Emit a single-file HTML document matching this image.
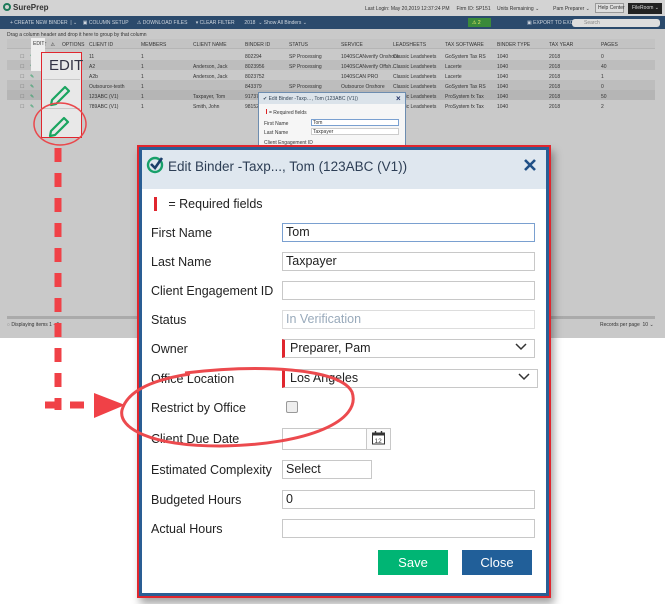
<!DOCTYPE html>
<html><head><meta charset="utf-8"><style>
*{margin:0;padding:0;box-sizing:border-box}
body{width:665px;height:604px;position:relative;overflow:hidden;background:#fff;font-family:"Liberation Sans",sans-serif}
.a{position:absolute}
.t{position:absolute;font-size:5px;color:#333;white-space:nowrap}
.lbl{position:absolute;left:151px;font-size:12.5px;color:#222;white-space:nowrap}
.inp{position:absolute;left:282px;width:253px;height:19px;border:1px solid #c8c8c8;background:#fff;font-size:12.5px;color:#222;padding:1px 3px;white-space:nowrap}
</style></head><body>
<!-- background app (grayed) -->
<div class="a" style="left:0;top:0;width:665px;height:338px;background:#c9c9c9"></div>
<div class="a" style="left:0;top:0;width:665px;height:16px;background:#d3d3d3"></div>
<div class="a" style="left:3px;top:3px;width:8px;height:8px;border-radius:50%;border:2px solid #1e7a5a"></div>
<div class="t" style="left:13px;top:3px;font-size:8px;font-weight:bold;color:#333">SurePrep</div>
<div class="t" style="left:365px;top:6px">Last Login: May 20,2019 12:37:24 PM &nbsp;&nbsp;&nbsp; Firm ID: SP151</div>
<div class="t" style="left:497px;top:6px">Units Remaining ⌄ &nbsp;&nbsp;&nbsp;&nbsp;&nbsp;&nbsp;&nbsp;&nbsp; Pam Preparer ⌄</div>
<div class="a" style="left:595px;top:3px;width:29px;height:10px;border:1px solid #999;background:#ddd"></div>
<div class="t" style="left:598px;top:5px">Help Center</div>
<div class="a" style="left:628px;top:3px;width:34px;height:11px;background:#222"></div>
<div class="t" style="left:632px;top:5px;color:#ddd">FileRoom ⌄</div>
<div class="a" style="left:0;top:16px;width:665px;height:13px;background:#2b4a6c"></div>
<div class="t" style="left:10px;top:20px;color:#cfd6de">+ CREATE NEW BINDER &nbsp;| ⌄ &nbsp;&nbsp;&nbsp;▣ COLUMN SETUP &nbsp;&nbsp;&nbsp;&nbsp; ⚠ DOWNLOAD FILES &nbsp;&nbsp;&nbsp;&nbsp; ▾ CLEAR FILTER &nbsp;&nbsp;&nbsp;&nbsp;&nbsp; 2018 &nbsp;⌄ Show All Binders ⌄</div>
<div class="a" style="left:468px;top:18px;width:23px;height:9px;background:#3a8a3a"></div>
<div class="t" style="left:472px;top:20px;color:#ee6">⚠ 2</div>
<div class="t" style="left:527px;top:20px;color:#cfd6de">▣ EXPORT TO EXCEL</div>
<div class="a" style="left:572px;top:19px;width:88px;height:8px;border-radius:3px;background:#ddd"></div>
<div class="t" style="left:584px;top:20px;color:#888">Search</div>
<div class="t" style="left:7px;top:32px">Drag a column header and drop it here to group by that column</div>
<div class="a" style="left:7px;top:39px;width:648px;height:10px;background:#c3c3c3;border-bottom:1px solid #b5b5b5"></div>
<div class="t" style="left:35px;top:42px">EDIT &nbsp; ⚠</div>
<div class="t" style="left:62px;top:42px">OPTIONS</div>
<div class="t" style="left:89px;top:42px">CLIENT ID</div><div class="t" style="left:141px;top:42px">MEMBERS</div><div class="t" style="left:193px;top:42px">CLIENT NAME</div><div class="t" style="left:245px;top:42px">BINDER ID</div><div class="t" style="left:289px;top:42px">STATUS</div><div class="t" style="left:341px;top:42px">SERVICE</div><div class="t" style="left:393px;top:42px">LEADSHEETS</div><div class="t" style="left:445px;top:42px">TAX SOFTWARE</div><div class="t" style="left:497px;top:42px">BINDER TYPE</div><div class="t" style="left:549px;top:42px">TAX YEAR</div><div class="t" style="left:601px;top:42px">PAGES</div>
<div class="a" style="left:7px;top:60px;width:648px;height:10px;background:#bdbdbd"></div>
<div class="a" style="left:7px;top:80px;width:648px;height:10px;background:#bdbdbd"></div>
<div class="a" style="left:7px;top:90px;width:648px;height:10px;background:#b5b5b5"></div>
<div class="t" style="left:89px;top:52px;line-height:10px">11<br>A2<br>A2b<br>Outsource-testh<br>123ABC (V1)<br>789ABC (V1)</div>
<div class="t" style="left:141px;top:52px;line-height:10px">1<br>1<br>1<br>1<br>1<br>1</div>
<div class="t" style="left:193px;top:52px;line-height:10px">&nbsp;<br>Anderson, Jack<br>Anderson, Jack<br>&nbsp;<br>Taxpayer, Tom<br>Smith, John</div>
<div class="t" style="left:245px;top:52px;line-height:10px">802294<br>8023956<br>8023752<br>843379<br>917373<br>981528</div>
<div class="t" style="left:289px;top:52px;line-height:10px">SP Processing<br>SP Processing<br>&nbsp;<br>SP Processing</div>
<div class="t" style="left:341px;top:52px;line-height:10px">1040SCANverify Onshore<br>1040SCANverify Offsh…<br>1040SCAN PRO<br>Outsource Onshore</div>
<div class="t" style="left:393px;top:52px;line-height:10px">Classic Leadsheets<br>Classic Leadsheets<br>Classic Leadsheets<br>Classic Leadsheets<br>Classic Leadsheets<br>Classic Leadsheets</div>
<div class="t" style="left:445px;top:52px;line-height:10px">GoSystem Tax RS<br>Lacerte<br>Lacerte<br>GoSystem Tax RS<br>ProSystem fx Tax<br>ProSystem fx Tax</div>
<div class="t" style="left:497px;top:52px;line-height:10px">1040<br>1040<br>1040<br>1040<br>1040<br>1040</div>
<div class="t" style="left:549px;top:52px;line-height:10px">2018<br>2018<br>2018<br>2018<br>2018<br>2018</div>
<div class="t" style="left:601px;top:52px;line-height:10px">0<br>40<br>1<br>0<br>50<br>2</div>
<div class="t" style="left:20px;top:52px;line-height:10px;color:#777">☐<br>☐<br>☐<br>☐<br>☐<br>☐</div>
<div class="t" style="left:30px;top:52px;line-height:10px;color:#1a9a5a">✎<br>✎<br>✎<br>✎<br>✎<br>✎</div>
<div class="a" style="left:7px;top:316px;width:648px;height:3px;background:#aaa"></div>
<div class="t" style="left:7px;top:322px">◌ Displaying items 1 - 6</div>
<div class="t" style="left:600px;top:322px">Records per page &nbsp;10 ⌄</div>
<!-- small dialog -->
<div class="a" style="left:258px;top:92px;width:148px;height:54px;background:#f6f6f6;border:1px solid #6d8db0"></div>
<div class="a" style="left:259px;top:93px;width:146px;height:11px;background:#dbe3ea"></div>
<div class="t" style="left:263px;top:96px;color:#345">✔ Edit Binder -Taxp…, Tom (123ABC (V1))</div>
<div class="t" style="left:396px;top:94px;font-size:8px;color:#236;font-weight:bold">×</div>
<div class="a" style="left:266px;top:109px;width:1px;height:5px;background:#d22"></div>
<div class="t" style="left:269px;top:110px">= Required fields</div>
<div class="t" style="left:264px;top:121px">First Name</div>
<div class="a" style="left:311px;top:119px;width:88px;height:7px;border:1px solid #7aa0d0;background:#fff"></div><div class="t" style="left:313px;top:120px">Tom</div>
<div class="t" style="left:264px;top:130px">Last Name</div>
<div class="a" style="left:311px;top:128px;width:88px;height:7px;border:1px solid #ccc;background:#fff"></div><div class="t" style="left:313px;top:129px">Taxpayer</div>
<div class="t" style="left:264px;top:140px">Client Engagement ID</div>
<!-- magnified edit column -->
<div class="a" style="left:31px;top:38px;width:14px;height:33px;background:#eee"></div>
<div class="t" style="left:33px;top:41px">EDIT</div>
<div class="a" style="left:41px;top:52px;width:41px;height:86px;background:#e8e8e8;border:1.5px solid #e0262e"></div>
<div class="a" style="left:43px;top:79px;width:37px;height:1px;background:#c8c8c8"></div>
<div class="a" style="left:43px;top:108px;width:37px;height:1px;background:#c8c8c8"></div>
<div class="t" style="left:49px;top:57px;font-size:15px;color:#334">EDIT</div>
<svg class="a" style="left:0;top:0" width="665" height="604">
<g stroke="#1aa560" stroke-width="2.2" fill="none" stroke-linecap="round" stroke-linejoin="round">
<path d="M52 100 L65 87 L69 91 L56 104 L51 105 Z"/>
<path d="M51 131 L64 118 L68 122 L55 135 L50 136 Z"/>
</g>
<ellipse cx="60" cy="124" rx="26" ry="21" fill="none" stroke="#e9484c" stroke-width="1.5"/>
<g stroke="#f04147" stroke-width="7" fill="none">
<path d="M58 148 V410" stroke-dasharray="14 11"/>
<path d="M45 405 H96" stroke-dasharray="14 11"/>
</g>
<path d="M94 393 L125 405 L94 418 Z" fill="#f04147"/>
</svg>
<!-- main dialog -->
<div class="a" style="left:137px;top:145px;width:414px;height:453px;border:2px solid #e0262e;box-shadow:3px 6px 8px rgba(0,0,0,.35);background:#fff"></div>
<div class="a" style="left:139px;top:147px;width:410px;height:449px;border:3px solid #2a5e94"></div>
<div class="a" style="left:142px;top:150px;width:404px;height:39px;background:#dfe7ef"></div>
<svg class="a" style="left:146px;top:156px" width="18" height="18"><circle cx="9" cy="9" r="7" fill="none" stroke="#17a06a" stroke-width="2.4"/><path d="M5 8 L9 12 L16 2" stroke="#1b3f6a" stroke-width="2.6" fill="none"/></svg>
<div class="a" style="left:168px;top:159px;font-size:13.5px;color:#2d3e55;white-space:nowrap">Edit Binder -Taxp..., Tom (123ABC (V1))</div>
<svg class="a" style="left:523px;top:158px" width="14" height="14"><path d="M2 2 L12 12 M12 2 L2 12" stroke="#1f4f86" stroke-width="2.6"/></svg>
<div class="a" style="left:154px;top:197px;width:3px;height:14px;background:#e0262e"></div>
<div class="lbl" style="top:197px">&nbsp;&nbsp;&nbsp;&nbsp; = Required fields</div>
<div class="lbl" style="top:226px">First Name</div>
<div class="inp" style="top:223px;border-color:#7aa0d0">Tom</div>
<div class="lbl" style="top:255px">Last Name</div>
<div class="inp" style="top:252px">Taxpayer</div>
<div class="lbl" style="top:284px">Client Engagement ID</div>
<div class="inp" style="top:281px"></div>
<div class="lbl" style="top:313px">Status</div>
<div class="inp" style="top:310px;color:#9ab;border-color:#ddd">In Verification</div>
<div class="lbl" style="top:342px">Owner</div>
<div class="inp" style="top:339px;border-left:3px solid #e0262e;padding-left:5px">Preparer, Pam</div>
<div class="lbl" style="top:372px">Office Location</div>
<div class="inp" style="top:369px;width:256px;border-left:3px solid #e0262e;padding-left:5px">Los Angeles</div>
<svg class="a" style="left:0;top:0" width="665" height="604">
<path d="M516 344 L521 349 L526 344" stroke="#333" stroke-width="1.5" fill="none"/>
<path d="M519 374 L524 379 L529 374" stroke="#333" stroke-width="1.5" fill="none"/>
<path d="M355 469 L360 474 L365 469" stroke="#333" stroke-width="1.5" fill="none"/>
</svg>
<div class="lbl" style="top:401px">Restrict by Office</div>
<div class="a" style="left:286px;top:401px;width:12px;height:12px;border:1px solid #999;border-radius:2px;background:#eee"></div>
<div class="lbl" style="top:432px">Client Due Date</div>
<div class="a" style="left:282px;top:428px;width:85px;height:22px;border:1px solid #c8c8c8"></div>
<div class="a" style="left:366px;top:428px;width:25px;height:22px;border:1px solid #c8c8c8;background:#fafafa"></div>
<svg class="a" style="left:371px;top:430px" width="15" height="16"><rect x="1.5" y="3" width="12" height="11" fill="#fff" stroke="#333"/><rect x="1.5" y="3" width="12" height="2.5" fill="#333"/><path d="M4.5 1 V4 M10.5 1 V4" stroke="#333" stroke-width="1.4"/><text x="3.5" y="13" font-size="6.5" font-family="Liberation Sans" fill="#333">12</text></svg>
<div class="lbl" style="top:463px">Estimated Complexity</div>
<div class="inp" style="top:460px;width:90px">Select</div>
<div class="lbl" style="top:493px">Budgeted Hours</div>
<div class="inp" style="top:490px">0</div>
<div class="lbl" style="top:522px">Actual Hours</div>
<div class="inp" style="top:519px"></div>
<div class="a" style="left:378px;top:550px;width:70px;height:25px;background:#00b574;color:#fff;font-size:13px;text-align:center;line-height:25px">Save</div>
<div class="a" style="left:462px;top:550px;width:70px;height:25px;background:#215f99;color:#fff;font-size:13px;text-align:center;line-height:25px">Close</div>
<svg class="a" style="left:0;top:0" width="665" height="604">
<path d="M185 373 C260 364 340 368 352 392 C362 420 310 445 220 446 C150 446 118 428 122 410 C127 392 150 380 190 374" fill="none" stroke="#ec4a4e" stroke-width="3"/>
</svg>
</body></html>
